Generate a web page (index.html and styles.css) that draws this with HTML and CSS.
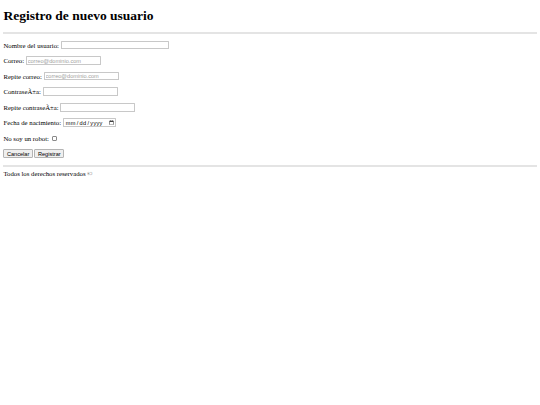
FILE: index.html
```html
<!DOCTYPE html>
<html lang="es">
<head>
<meta charset="utf-8">
<title>Registro de nuevo usuario</title>
<link rel="stylesheet" href="styles.css">
</head>
<body class="page">
<header class="site-header">
<h1 class="title">Registro de nuevo usuario</h1>
</header>
<hr class="rule">
<form class="form">
<p class="row"><label class="label">Nombre del usuario: <input type="text" class="field field-wide"></label></p>
<p class="row"><label class="label">Correo: <input type="email" class="field" placeholder="correo@dominio.com"></label></p>
<p class="row"><label class="label">Repite correo: <input type="email" class="field" placeholder="correo@dominio.com"></label></p>
<p class="row"><label class="label">ContraseÃ±a: <input type="password" class="field"></label></p>
<p class="row"><label class="label">Repite contraseÃ±a: <input type="password" class="field"></label></p>
<p class="row"><label class="label">Fecha de nacimiento: <input type="date" class="field date"></label></p>
<p class="row"><label class="label">No soy un robot: <input type="checkbox" class="check"></label></p>
<p class="row buttons"><button type="button" class="btn">Cancelar</button><button type="submit" class="btn">Registrar</button></p>
</form>
<hr class="rule">
<footer class="site-footer">Todos los derechos reservados ©</footer>
</body>
</html>
```
FILE: styles.css
```css
.page {
  margin: 3.4px;
  font-family: "Liberation Serif", "Times New Roman", serif;
  font-size: 6.75px;
  color: #000;
  background: #fff;
}
.title {
  font-size: 13.5px;
  font-weight: bold;
  margin: 4.5px 0 8.5px;
  line-height: 15.5px;
}
.rule {
  height: 0;
  margin: 3.4px 0;
  border: 0;
  border-top: 2px solid #e4e4e4;
}
.row {
  display: flex;
  align-items: center;
  height: 8.8px;
  margin: 6.75px 0;
}
.buttons {
  gap: 1.7px;
}
.label {
  display: flex;
  align-items: center;
  gap: 0;
  white-space: pre;
}
.field {
  box-sizing: border-box;
  height: 8.6px;
  width: 75px;
  padding: 0 1px;
  margin: 0;
  border: 1px solid #c8c8c8;
  border-radius: 0.5px;
  font-family: "Liberation Sans", Arial, sans-serif;
  font-size: 5.6px;
  color: #000;
  background: #fff;
}
.field::placeholder {
  color: #a0a0a0;
}
.field-wide {
  width: 108px;
}
.date {
  width: 53px;
  padding: 0 1px;
}
.date::-webkit-datetime-edit {
  padding: 0;
  letter-spacing: 0.3px;
}
.date::-webkit-calendar-picker-indicator {
  width: 5px;
  height: 5px;
  padding: 0;
  margin: 0;
}
.check {
  -webkit-appearance: none;
  appearance: none;
  box-sizing: border-box;
  width: 5.4px;
  height: 5.4px;
  margin: 0 0 0 1.2px;
  border: 1px solid #8a8a8a;
  border-radius: 1px;
  background: #fff;
}
.btn {
  box-sizing: border-box;
  height: 8.8px;
  padding: 0 2.5px;
  margin: 0;
  border: 1px solid #b4b4b4;
  border-radius: 1px;
  background: #efefef;
  font-family: "Liberation Sans", Arial, sans-serif;
  font-size: 5.6px;
  line-height: 6px;
  color: #000;
}
.site-footer {
  line-height: 8px;
}
```
